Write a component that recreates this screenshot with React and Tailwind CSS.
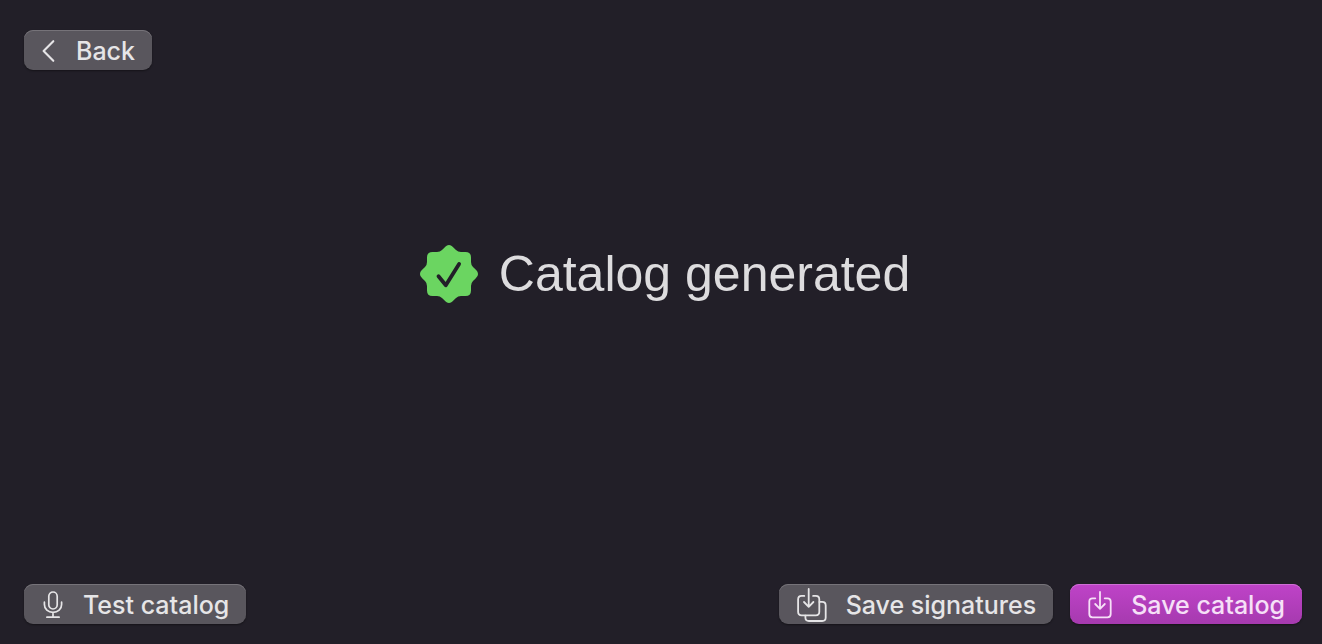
import { clsx } from "clsx";

const stroke = {
  fill: "none",
  stroke: "currentColor",
  strokeLinecap: "round",
  strokeLinejoin: "round",
  "aria-hidden": true,
};

function ChevronIcon() {
  return (
    <svg {...stroke} width="20" height="24" viewBox="0 0 20 24" strokeWidth="2.1">
      <path d="M13.3 2.2 3.6 12l9.7 9.8" />
    </svg>
  );
}

function MicIcon() {
  return (
    <svg {...stroke} width="27" height="28" viewBox="-3 0 27 28" strokeWidth="1.7">
      <rect x="5.8" y="1" width="8.4" height="17" rx="4.2" />
      <path d="M1.4 11.2v2.2c0 4.7 3.7 8 8.6 8s8.6-3.3 8.6-8v-2.2M10 21.6v4.6M3.9 26.2h12.2" />
    </svg>
  );
}

function SaveIcon() {
  return (
    <svg {...stroke} width="29" height="28" viewBox="-2 0 29 28" strokeWidth="1.8">
      <path d="M7.3 7.3H4.6c-2.1 0-3.3 1.2-3.3 3.3v12.4c0 2.1 1.2 3.3 3.3 3.3h14.8c2.1 0 3.3-1.2 3.3-3.3V10.6c0-2.1-1.2-3.3-3.3-3.3h-2.7" />
      <path d="M12 .9v16.7M7.2 13l4.8 4.8 4.8-4.8" />
    </svg>
  );
}

function SaveAllIcon() {
  return (
    <svg {...stroke} width="35" height="34" viewBox="-2 0 35 34" strokeWidth="1.8">
      <path d="M7.3 7.9H4.6c-2.3 0-3.5 1.2-3.5 3.5v12.4c0 2.3 1.2 3.5 3.5 3.5h14.2c2.3 0 3.5-1.2 3.5-3.5V11.4c0-2.3-1.2-3.5-3.5-3.5h-2.7" />
      <path d="M11.7 1v17.4M7 14l4.7 4.8 4.7-4.8" />
      <path d="M22.5 13.9h2.7c2.3 0 3.5 1.2 3.5 3.5v12.1c0 2.3-1.2 3.5-3.5 3.5H11.9c-2.3 0-3.5-1.2-3.5-3.5v-1.9" />
    </svg>
  );
}

const sealQuarter =
  "M0-29C1.8-29 3-28 4.4-26.6L7-24Q9-22 12-22L16.5-22Q22-22 22-16.5L22-12Q22-9 24-7L26.6-4.4C28-3 29-1.8 29 0L0 0Z";

function SealIcon() {
  return (
    <svg width="58" height="58" viewBox="-29 -29 58 58" aria-hidden="true" className="shrink-0">
      <g fill="#6bd561">
        <path d={sealQuarter} />
        <path d={sealQuarter} transform="rotate(90)" />
        <path d={sealQuarter} transform="rotate(180)" />
        <path d={sealQuarter} transform="rotate(270)" />
      </g>
      <path
        d="M-10.5 2.2l7.3 9L10.1-10.1"
        fill="none"
        stroke="#221f28"
        strokeWidth="3.8"
        strokeLinecap="round"
        strokeLinejoin="round"
      />
    </svg>
  );
}

function Button({ icon, primary, children }) {
  return (
    <button
      type="button"
      className={clsx(
        "flex h-10 items-center gap-4 rounded-[9px] pt-0.5 pr-[17px] pl-4 text-[25px] leading-8 font-medium whitespace-nowrap",
        primary
          ? "bg-linear-to-b from-[#bf43c8] to-[#a63aaf] text-[#f6e0f7] shadow-[inset_0_1px_0_#cf6fd5,0_1px_2px_#0006]"
          : "bg-[#59565d] text-[#e6e5e7] shadow-[inset_0_1px_0_#767379,0_1px_2px_#0006]"
      )}
    >
      {icon}
      <span>{children}</span>
    </button>
  );
}

export default function App() {
  return (
    <div className="flex min-h-screen flex-col bg-[#221f28] pt-[30px] pr-5 pb-5 pl-6 font-['Inter','Liberation_Sans',sans-serif]">
      <header className="flex">
        <Button icon={<ChevronIcon />}>Back</Button>
      </header>
      <main className="flex flex-1 items-center justify-center gap-[21px] pb-[106px] pl-1">
        <SealIcon />
        <h1 className="font-['Liberation_Sans',Arial,sans-serif] text-[50px] leading-16 text-[#dddcde]">
          Catalog generated
        </h1>
      </main>
      <footer className="flex items-center justify-between">
        <Button icon={<MicIcon />}>Test catalog</Button>
        <div className="flex gap-[17px]">
          <Button icon={<SaveAllIcon />}>Save signatures</Button>
          <Button icon={<SaveIcon />} primary>Save catalog</Button>
        </div>
      </footer>
    </div>
  );
}
